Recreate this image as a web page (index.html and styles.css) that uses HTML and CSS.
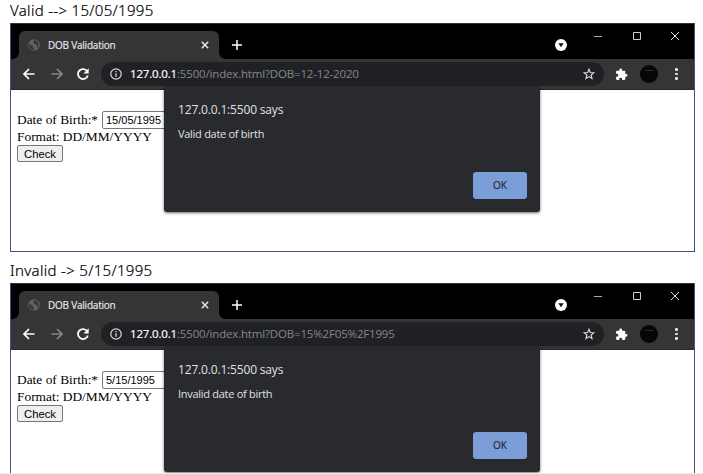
FILE: index.html
```html
<!DOCTYPE html>
<html lang="en">
<head>
<meta charset="utf-8">
<title>DOB Validation</title>
<link rel="stylesheet" href="styles.css">
</head>
<body>
<svg class="defs" aria-hidden="true">
  <symbol id="globe" viewBox="0 0 12 12"><circle cx="6" cy="6" r="5.8" fill="#5f6368"/><path d="M1.2 4.5L3 6l1.5.6.3 1.6 1 .7v2C3 10.900 1 8.800 1 6.500zM6 1.200L5 3l1.200 1 .2 1.300 2 .3 1 1.400-.6 2 1.500-.8C11.400 5 9.800 1.700 6 1.200z" fill="#353535"/></symbol>
  <symbol id="back" viewBox="0 0 12 12"><path d="M11.500 6H1.200M6 1L1 6l5 5" fill="none" stroke="currentColor" stroke-width="1.700"/></symbol>
  <symbol id="reload" viewBox="0 0 12 12"><path d="M10.300 3.500A5 5 0 1 0 10.800 7.400" fill="none" stroke="currentColor" stroke-width="1.800"/><path d="M11.700.3v5.200H6.500z" fill="currentColor"/></symbol>
  <symbol id="info" viewBox="0 0 12 12"><circle cx="6" cy="6" r="5.200" fill="none" stroke="currentColor" stroke-width="1.200"/><path d="M6 5.300v3.500M6 3v1.300" stroke="currentColor" stroke-width="1.300"/></symbol>
  <symbol id="star" viewBox="0 0 12 12"><path d="M6 1.200l1.300 3.300 3.600.2-2.800 2.300.9 3.500L6 8.600l-3 1.900.9-3.500L1.100 4.700l3.600-.2z" fill="none" stroke="currentColor" stroke-width="1.100"/></symbol>
  <symbol id="puzzle" viewBox="0 0 24 24"><path fill="currentColor" d="M20.500 11H19V7c0-1.100-.9-2-2-2h-4V3.500a2.500 2.500 0 0 0-5 0V5H4c-1.100 0-2 .9-2 2v3.800h1.500a2.700 2.700 0 0 1 0 5.400H2V20c0 1.100.9 2 2 2h3.800v-1.500a2.700 2.700 0 0 1 5.400 0V22H17c1.100 0 2-.9 2-2v-4h1.500a2.500 2.500 0 0 0 0-5z"/></symbol>
  <symbol id="search-tabs" viewBox="0 0 12 12"><circle cx="6" cy="6" r="6" fill="#fff"/><path d="M3.300 4.300h5.400L6 8.200z" fill="#111"/></symbol>
  <symbol id="minimize" viewBox="0 0 10 10"><path d="M.8 5.500h8.400" stroke="#aaa" stroke-width="1"/></symbol>
  <symbol id="maximize" viewBox="0 0 10 10"><path d="M1.500 1.500h7v7h-7z" fill="none" stroke="#ccc" stroke-width="1"/></symbol>
  <symbol id="close" viewBox="0 0 10 10"><path d="M1 1l8 8M9 1L1 9" stroke="currentColor" fill="none"/></symbol>
  <symbol id="plus" viewBox="0 0 10 10"><path d="M5 0v10M0 5h10" stroke="#fff" stroke-width="1.500"/></symbol>
</svg>
<main class="document">
  <section class="example">
    <h2 class="caption">Valid --&gt; 15/05/1995</h2>
    <div class="window">
      <div class="tabs">
        <div class="tab"><svg class="globe"><use href="#globe"/></svg><span class="tab-title">DOB Validation</span><svg class="tab-close"><use href="#close"/></svg></div>
        <svg class="plus"><use href="#plus"/></svg>
        <svg class="search-tabs"><use href="#search-tabs"/></svg>
        <div class="controls"><svg><use href="#minimize"/></svg><svg><use href="#maximize"/></svg><svg><use href="#close"/></svg></div>
      </div>
      <div class="toolbar">
        <svg class="back"><use href="#back"/></svg><svg class="forward"><use href="#back"/></svg><svg class="reload"><use href="#reload"/></svg>
        <div class="address"><svg><use href="#info"/></svg><span class="url"><b>127.0.0.1</b><span class="path">:5500/index.html?DOB=12-12-2020</span></span><svg class="star"><use href="#star"/></svg></div>
        <svg class="puzzle"><use href="#puzzle"/></svg><span class="avatar"></span><span class="menu"><i></i><i></i><i></i></span>
      </div>
      <div class="page">
        <div class="field"><span class="label">Date of Birth:*</span><span class="input">15/05/1995</span></div>
        <div class="format">Format: DD/MM/YYYY</div>
        <button class="check">Check</button>
      </div>
      <div class="dialog">
        <div class="origin"><span>127.0.0.1:5500 says</span></div>
        <div class="message"><span>Valid date of birth</span></div>
        <button class="ok">OK</button>
      </div>
    </div>
  </section>
  <section class="example">
    <h2 class="caption">Invalid -&gt; 5/15/1995</h2>
    <div class="window">
      <div class="tabs">
        <div class="tab"><svg class="globe"><use href="#globe"/></svg><span class="tab-title">DOB Validation</span><svg class="tab-close"><use href="#close"/></svg></div>
        <svg class="plus"><use href="#plus"/></svg>
        <svg class="search-tabs"><use href="#search-tabs"/></svg>
        <div class="controls"><svg><use href="#minimize"/></svg><svg><use href="#maximize"/></svg><svg><use href="#close"/></svg></div>
      </div>
      <div class="toolbar">
        <svg class="back"><use href="#back"/></svg><svg class="forward"><use href="#back"/></svg><svg class="reload"><use href="#reload"/></svg>
        <div class="address"><svg><use href="#info"/></svg><span class="url"><b>127.0.0.1</b><span class="path">:5500/index.html?DOB=15%2F05%2F1995</span></span><svg class="star"><use href="#star"/></svg></div>
        <svg class="puzzle"><use href="#puzzle"/></svg><span class="avatar"></span><span class="menu"><i></i><i></i><i></i></span>
      </div>
      <div class="page">
        <div class="field"><span class="label">Date of Birth:*</span><span class="input">5/15/1995</span></div>
        <div class="format">Format: DD/MM/YYYY</div>
        <button class="check">Check</button>
      </div>
      <div class="dialog">
        <div class="origin"><span>127.0.0.1:5500 says</span></div>
        <div class="message"><span>Invalid date of birth</span></div>
        <button class="ok">OK</button>
      </div>
    </div>
  </section>
</main>
</body>
</html>
```
FILE: styles.css
```css
* { box-sizing: border-box; }
body { margin: 0; background: #fff; overflow: hidden; }
svg { display: block; flex: none; }
.defs { position: absolute; width: 0; height: 0; }
.document { height: 474px; overflow: hidden; border-bottom: 1px solid #eee; padding-left: 10px; }
.example { width: 685px; height: 260px; }
.caption { margin: 0; height: 23px; font: 300 15px/20px "Noto Sans", sans-serif; letter-spacing: .31px; -webkit-text-stroke: .2px #000; color: #000; white-space: nowrap; }
.window { position: relative; height: 229px; border: 1px solid #40567c; border-top-color: #24344d; background: #fff; }
.tabs { height: 35px; background: #000; display: flex; align-items: flex-start; padding: 7px 0 0 8px; }
.tab { position: relative; width: 200px; height: 28px; background: #353535; border-radius: 6px 6px 0 0; display: flex; align-items: center; padding: 0 10px 0 9px; color: #e8eaed; }
.tab::before, .tab::after { content: ""; position: absolute; bottom: 0; width: 6px; height: 6px; }
.tab::before { left: -6px; background: radial-gradient(circle at 0 0, #000 5.500px, #353535 6px); }
.tab::after { right: -6px; background: radial-gradient(circle at 100% 0, #000 5.500px, #353535 6px); }
.globe { width: 12px; height: 12px; }
.tab-title { margin-left: 8px; flex: 1; font: 10px/16px "Open Sans", sans-serif; letter-spacing: -.22px; -webkit-text-stroke: .15px; white-space: nowrap; }
.tab-close { width: 8px; height: 8px; stroke-width: 1.800; }
.plus { width: 10px; height: 10px; margin: 9px 0 0 13px; }
.search-tabs { width: 12px; height: 12px; margin: 8px 0 0 313px; }
.controls { display: flex; gap: 28.500px; margin: 0 0 0 26px; color: #ddd; }
.controls svg { width: 10px; height: 10px; }
.toolbar { height: 31px; background: #353535; display: flex; align-items: center; padding-left: 12px; color: #fff; border-bottom: 1px solid #29292b; }
.back, .forward, .reload { width: 12px; height: 12px; }
.forward { margin-left: 16px; transform: scaleX(-1); color: #85878a; }
.reload { margin-left: 14px; }
.address { width: 503px; height: 24px; margin-left: 12px; border-radius: 12px; background: #202124; display: flex; align-items: center; padding: 0 9px; color: #dadce0; }
.address svg { width: 12px; height: 12px; }
.url { margin-left: 8px; flex: 1; font: 11.500px/18px "Open Sans", sans-serif; letter-spacing: -.17px; white-space: nowrap; }
.url b { font-weight: 400; color: #fff; -webkit-text-stroke: .2px #fff; }
.path { color: #85888c; }
.puzzle { width: 13px; height: 13px; margin-left: 11px; }
.avatar { width: 18px; height: 18px; border-radius: 50%; background: #070607; margin-left: 12px; display: flex; justify-content: center; padding-top: 5px; }
.avatar::before { content: ""; width: 8px; height: 1px; background: linear-gradient(90deg, #292929 70%, #671c1c 70%); }
.menu { display: flex; flex-direction: column; gap: 2px; margin-left: 17px; }
.menu i { width: 2.500px; height: 2.500px; background: #e8eaed; border-radius: 50%; }
.page { padding: 21px 0 0 6px; font: 13.400px/17px "Liberation Serif", serif; color: #000; }
.field { display: flex; height: 17px; align-items: center; white-space: nowrap; }
.label { width: 85px; }
.input { width: 100px; height: 18px; border: 1px solid #767676; border-radius: 2px; padding-left: 3px; font: 11px/16px "Liberation Sans", sans-serif; }
.check { display: block; margin: 0; width: 46px; height: 17px; padding: 0; border: 1px solid #767676; border-radius: 2px; background: #efefef; font: 11.300px/14px "Liberation Sans", sans-serif; color: #000; }
.dialog { position: absolute; left: 153px; top: 62px; width: 376px; height: 126px; background: #292a2d; border-radius: 3px; box-shadow: 0 1px 3px #0009; padding: 15px 13px 13px 14px; display: flex; flex-direction: column; font-family: "Open Sans", sans-serif; color: #e0e1e3; white-space: nowrap; }
.origin { font-size: 12px; line-height: 18px; letter-spacing: -.17px; }
.message { font-size: 11px; line-height: 16px; margin-top: 7px; letter-spacing: -.28px; }
.ok { margin: auto 0 0 auto; width: 54px; height: 27px; border: 0; border-radius: 3px; background: #7b9dd8; color: #292c34; font: 10px/27px "Open Sans", sans-serif; padding: 0; -webkit-text-stroke: .2px #292c34; }
```
